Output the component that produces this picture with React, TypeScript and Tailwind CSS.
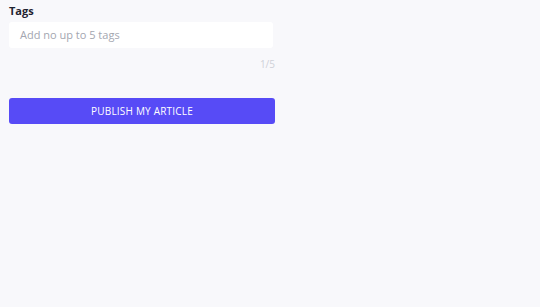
export default function App() {
  return (
    <div className="min-h-screen w-full bg-[#f8f8fb] font-['Open_Sans',sans-serif]">
      <div className="w-[292px] px-[9px] pt-[4px]">
        <label className="block text-[11px] font-bold text-[#1f2330] leading-[14px]">Tags</label>
        <div className="mt-[4px] h-[26px] w-[264px] rounded-[3px] bg-white flex items-center px-[11px]">
          <span className="text-[11px] text-[#a3a6b0]">Add no up to 5 tags</span>
        </div>
        <div className="mt-[9px] w-[268px] flex justify-end">
          <span className="text-[10px] text-[#cfd1d8] pr-[2px]">1/5</span>
        </div>
        <button className="mt-[26px] h-[26px] w-[266px] rounded-[3px] bg-[#574bf6] text-white text-[10px] tracking-[0.2px] uppercase">
          Publish my article
        </button>
      </div>
    </div>
  );
}
